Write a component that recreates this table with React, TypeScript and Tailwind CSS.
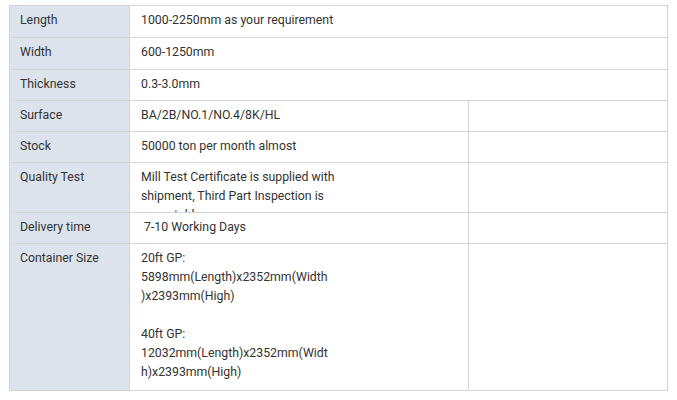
const rows: { label: string; value: string[]; span?: boolean; h: string; w?: string }[] = [
  { label: "Length", value: ["1000-2250mm as your requirement"], span: true, h: "h-[31px]" },
  { label: "Width", value: ["600-1250mm"], span: true, h: "h-[32px]" },
  { label: "Thickness", value: ["0.3-3.0mm"], span: true, h: "h-[31px]" },
  { label: "Surface", value: ["BA/2B/NO.1/NO.4/8K/HL"], h: "h-[31px]" },
  { label: "Stock", value: ["50000 ton per month almost"], h: "h-[31px]" },
  {
    label: "Quality Test",
    value: ["Mill Test Certificate is supplied with shipment, Third Part Inspection is acceptable."],
    h: "h-[50px]",
    w: "w-[200px]",
  },
  { label: "Delivery time", value: ["\u00a07-10 Working Days"], h: "h-[31px]" },
  {
    label: "Container Size",
    value: [
      "20ft GP:",
      "5898mm(Length)x2352mm(Width)x2393mm(High)",
      "\u00a0",
      "40ft GP:",
      "12032mm(Length)x2352mm(Width)x2393mm(High)",
    ],
    h: "h-[147px]",
    w: "w-[187px]",
  },
];

export default function App() {
  return (
    <div className="w-[677px] h-[400px] bg-white pt-[5px] pl-[9px] font-['Roboto',sans-serif] text-[12.3px] leading-[19px] text-[#333]">
      <div className="w-[659px] border border-[#d4d4d4]">
        {rows.map((r, i) => (
          <div key={r.label} className={`flex ${r.h} ${i > 0 ? "border-t border-[#d4d4d4]" : ""}`}>
            <div className="w-[120px] shrink-0 bg-[#dce3ed] border-r border-[#d4d4d4] pl-[10px] pt-[5px]">
              {r.label}
            </div>
            <div className="w-[338px] shrink-0 overflow-hidden pl-[11px] pt-[5px]">
              <div className={`${r.w ?? "w-full"} [overflow-wrap:anywhere]`}>
                {r.value.map((v, j) => (
                  <div key={j}>{v}</div>
                ))}
              </div>
            </div>
            <div className={`flex-1 ${r.span ? "" : "border-l border-[#d4d4d4]"}`} />
          </div>
        ))}
      </div>
    </div>
  );
}
